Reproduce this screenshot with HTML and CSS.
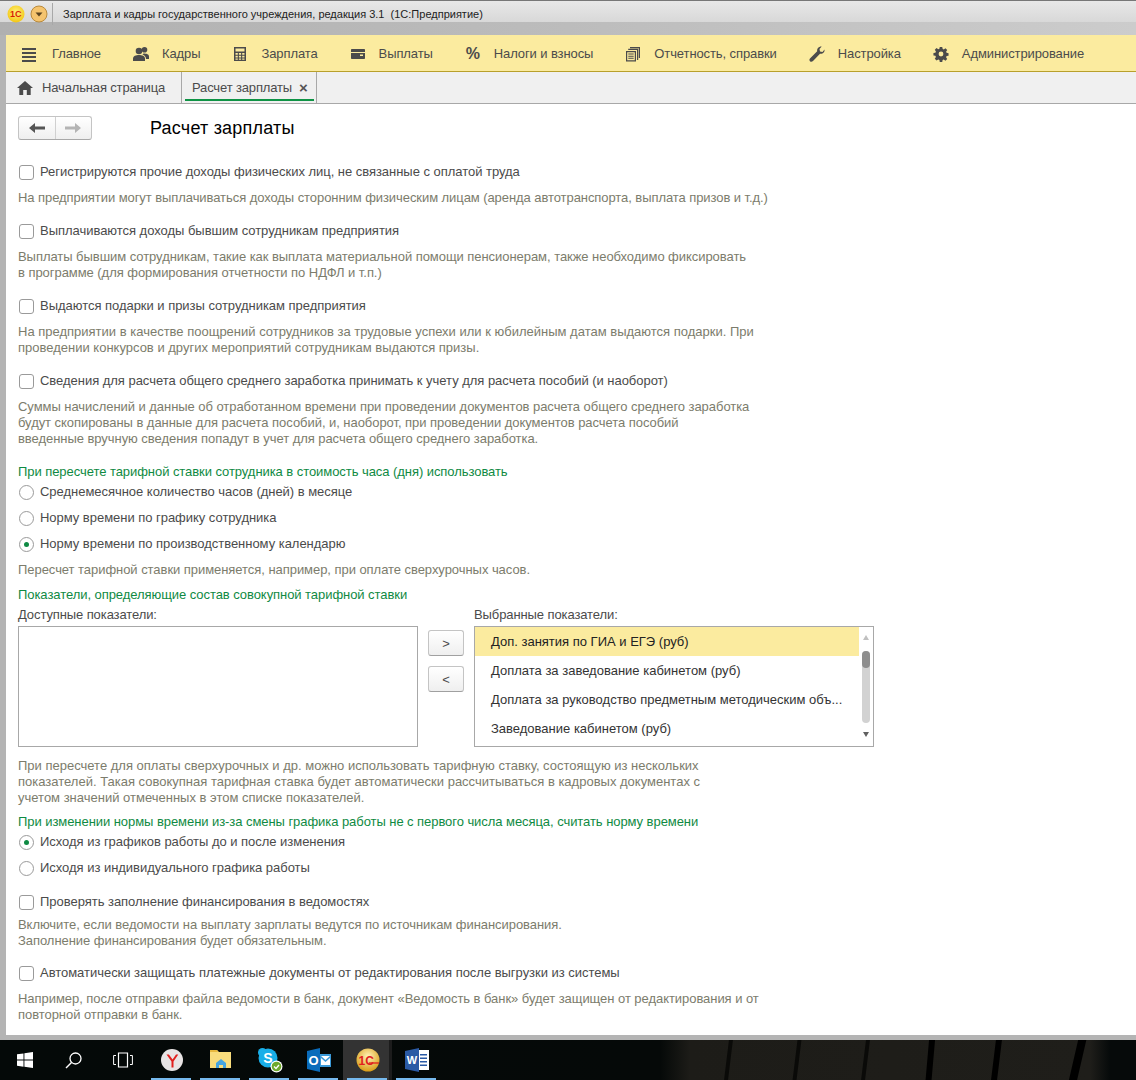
FILE: index.html
```html
<!DOCTYPE html>
<html lang="ru">
<head>
    <meta charset="UTF-8">
    <meta name="viewport" content="width=device-width, initial-scale=1.0">
    <title>Расчет зарплаты</title>
    <link rel="stylesheet" href="styles.css">
</head>
<body>
    <div class="window">
        <div class="titlebar">
            <svg class="logo" width="18" height="18" viewBox="0 0 18 18">
                <defs>
                    <radialGradient id="gold" cx="50%" cy="40%" r="60%">
                        <stop offset="0" stop-color="#fff27a"/>
                        <stop offset="1" stop-color="#f3c613"/>
                    </radialGradient>
                </defs>
                <circle cx="9" cy="9" r="8.5" fill="url(#gold)"/>
                <text x="3" y="12" class="logo-text">1С</text>
            </svg>
            <svg class="menu-btn" width="18" height="18" viewBox="0 0 18 18">
                <circle cx="9" cy="9" r="8" fill="#f5c46e" stroke="#b98a3c"/>
                <path d="M5.5 7.5h7L9 11.5z" fill="#5a4320"/>
            </svg>
            <span class="title-sep"></span>
            <span class="title-text">Зарплата и кадры государственного учреждения, редакция 3.1&nbsp; (1С:Предприятие)</span>
        </div>

        <div class="client">
            <nav class="sections">
                <a class="section section-first">
                    <svg class="section-icon" viewBox="0 0 16 16"><path d="M1 2h14v2H1zM1 6h14v2H1zM1 10h14v2H1zM1 14h14v2H1z"/></svg>
                    Главное
                </a>
                <a class="section">
                    <svg class="section-icon" viewBox="0 0 16 16"><circle cx="6" cy="5" r="3.3"/><path d="M0 15v-2.500C0 10 3 9 6 9s6 1 6 3.500V15z"/><circle cx="11.500" cy="3.800" r="2.800"/><path d="M10.500 7.500c3 0 5.500.8 5.500 3V13h-3c0-2-1-3.500-3.500-4.500z"/></svg>
                    Кадры
                </a>
                <a class="section">
                    <svg class="section-icon" viewBox="0 0 16 16"><path fill-rule="evenodd" d="M2 1h12v14H2zM3.500 2.500v3h9v-3zM3.500 7v1.800h2.300V7zM6.900 7v1.800h2.200V7zM10.200 7v1.800h2.300V7zM3.500 9.800v1.700h2.300V9.800zM6.900 9.800v1.700h2.200V9.800zM10.200 9.800v1.700h2.300V9.800zM3.500 12.500v1.200h2.300v-1.200zM6.900 12.500v1.200h2.200v-1.200zM10.200 12.500v1.200h2.300v-1.200z"/></svg>
                    Зарплата
                </a>
                <a class="section">
                    <svg class="section-icon" viewBox="0 0 16 16"><path fill-rule="evenodd" d="M2 3h12c.6 0 1 .4 1 1v8c0 .6-.4 1-1 1H2c-.6 0-1-.4-1-1V4c0-.6.4-1 1-1zM1 6h14v1H1zM10 8.500v1.500h3V8.500z"/></svg>
                    Выплаты
                </a>
                <a class="section">
                    <span class="section-icon percent">%</span>
                    Налоги и взносы
                </a>
                <a class="section">
                    <svg class="section-icon" viewBox="0 0 16 16"><path fill="none" stroke="currentColor" stroke-width="1.200" d="M5 1.600h9.400V12M3.200 3.400h9.400V14"/><path fill-rule="evenodd" d="M1 5h10v10.500H1zM2.200 6.200v8.100h7.600V6.200zM3.300 7.600h5.400v1H3.300zM3.300 9.700h5.400v1H3.300zM3.300 11.800h5.400v1H3.300z"/></svg>
                    Отчетность, справки
                </a>
                <a class="section">
                    <svg class="section-icon" viewBox="0 0 16 16"><path d="M15.500 3.500c.4 2.500-1.700 4.800-4.500 4.300L4 15c-1 1-2.200 1-3 .2s-.8-2 .2-3l7-7C7.700 2.500 10 .2 12.700.5L10.500 3l.5 2.500 2.500.5z"/></svg>
                    Настройка
                </a>
                <a class="section">
                    <svg class="section-icon" viewBox="-1 -1 18 18"><path fill-rule="evenodd" d="M6.600 0h2.800l.4 2.200 1.300.6 1.900-1.300 2 2-1.300 1.900.6 1.300 2.200.4v2.800l-2.200.4-.6 1.300 1.300 1.900-2 2-1.900-1.300-1.300.6-.4 2.200H6.600l-.4-2.200-1.300-.6L3 15.300l-2-2 1.300-1.900-.6-1.300L-.5 9.700V6.900l2.200-.4.6-1.300L1 3.300l2-2 1.900 1.300 1.300-.6zM8 5.300a2.700 2.700 0 1 0 0 5.400 2.700 2.700 0 0 0 0-5.400z"/></svg>
                    Администрирование
                </a>
            </nav>

            <div class="tabs">
                <div class="tab tab-home">
                    <svg class="home-icon" width="16" height="14" viewBox="0 0 16 14"><path d="M8 0l8 7h-2.300v7H9.800V9H6.200v5H2.300V7H0z"/></svg>
                    Начальная страница
                </div>
                <div class="tab tab-active">
                    Расчет зарплаты
                    <span class="tab-close">×</span>
                </div>
            </div>

            <main class="page">
                <div class="toolbar">
                    <div class="nav-buttons">
                        <span class="nav-btn">
                            <svg width="16" height="12" viewBox="0 0 16 12"><path d="M0 6l6-5v3.500h10v3H6V11z" fill="#555"/></svg>
                        </span>
                        <span class="nav-btn">
                            <svg width="16" height="12" viewBox="0 0 16 12"><path d="M16 6l-6-5v3.500H0v3h10V11z" fill="#b4b4b4"/></svg>
                        </span>
                    </div>
                    <h1 class="page-title">Расчет зарплаты</h1>
                </div>

                <label class="option"><span class="checkbox"></span>Регистрируются прочие доходы физических лиц, не связанные с оплатой труда</label>
                <p class="hint hint-wide">На предприятии могут выплачиваться доходы сторонним физическим лицам (аренда автотранспорта, выплата призов и т.д.)</p>

                <label class="option"><span class="checkbox"></span>Выплачиваются доходы бывшим сотрудникам предприятия</label>
                <p class="hint">Выплаты бывшим сотрудникам, такие как выплата материальной помощи пенсионерам, также необходимо фиксировать<br>в программе (для формирования отчетности по НДФЛ и т.п.)</p>

                <label class="option"><span class="checkbox"></span>Выдаются подарки и призы сотрудникам предприятия</label>
                <p class="hint hint-plain">На предприятии в качестве поощрений сотрудников за трудовые успехи или к юбилейным датам выдаются подарки. При<br>проведении конкурсов и других мероприятий сотрудникам выдаются призы.</p>

                <label class="option"><span class="checkbox"></span>Сведения для расчета общего среднего заработка принимать к учету для расчета пособий (и наоборот)</label>
                <p class="hint">Суммы начислений и данные об отработанном времени при проведении документов расчета общего среднего заработка<br>будут скопированы в данные для расчета пособий, и, наоборот, при проведении документов расчета пособий<br>введенные вручную сведения попадут в учет для расчета общего среднего заработка.</p>

                <div class="group-title">При пересчете тарифной ставки сотрудника в стоимость часа (дня) использовать</div>
                <label class="option option-first"><span class="radio"></span>Среднемесячное количество часов (дней) в месяце</label>
                <label class="option option-next"><span class="radio"></span>Норму времени по графику сотрудника</label>
                <label class="option option-next"><span class="radio radio-on"></span>Норму времени по производственному календарю</label>
                <p class="hint">Пересчет тарифной ставки применяется, например, при оплате сверхурочных часов.</p>

                <div class="group-title group-title-tight">Показатели, определяющие состав совокупной тарифной ставки</div>
                <div class="pickers">
                    <div class="picker picker-left">
                        <div class="picker-label">Доступные показатели:</div>
                        <div class="listbox"></div>
                    </div>
                    <div class="move-buttons">
                        <button class="move-btn" type="button">&gt;</button>
                        <button class="move-btn" type="button">&lt;</button>
                    </div>
                    <div class="picker picker-right">
                        <div class="picker-label">Выбранные показатели:</div>
                        <div class="listbox listbox-filled">
                            <ul class="list-rows">
                                <li class="list-row list-row-current">Доп. занятия по ГИА и ЕГЭ (руб)</li>
                                <li class="list-row">Доплата за заведование кабинетом (руб)</li>
                                <li class="list-row">Доплата за руководство предметным методическим объ...</li>
                                <li class="list-row">Заведование кабинетом (руб)</li>
                            </ul>
                            <div class="scrollbar">
                                <span class="scroll-up"></span>
                                <div class="scroll-track"><span class="scroll-thumb"></span></div>
                                <span class="scroll-down"></span>
                            </div>
                        </div>
                    </div>
                </div>
                <p class="hint hint-list">При пересчете для оплаты сверхурочных и др. можно использовать тарифную ставку, состоящую из нескольких<br>показателей. Такая совокупная тарифная ставка будет автоматически рассчитываться в кадровых документах с<br>учетом значений отмеченных в этом списке показателей.</p>

                <div class="group-title group-title-tighter">При изменении нормы времени из-за смены графика работы не с первого числа месяца, считать норму времени</div>
                <label class="option option-first"><span class="radio radio-on"></span>Исходя из графиков работы до и после изменения</label>
                <label class="option option-next"><span class="radio"></span>Исходя из индивидуального графика работы</label>

                <label class="option option-after"><span class="checkbox"></span>Проверять заполнение финансирования в ведомостях</label>
                <p class="hint hint-close">Включите, если ведомости на выплату зарплаты ведутся по источникам финансирования.<br>Заполнение финансирования будет обязательным.</p>

                <label class="option option-last"><span class="checkbox"></span>Автоматически защищать платежные документы от редактирования после выгрузки из системы</label>
                <p class="hint">Например, после отправки файла ведомости в банк, документ «Ведомость в банк» будет защищен от редактирования и от<br>повторной отправки в банк.</p>
            </main>
        </div>
    </div>

    <footer class="taskbar">
        <span class="task">
            <svg width="16" height="16" viewBox="0 0 16 16"><path d="M0 2.300l6.500-.9v6.200H0zM7.400 1.300L16 0v7.600H7.400zM0 8.500h6.500v6.200L0 13.800zM7.400 8.500H16V16l-8.600-1.200z" fill="#fff"/></svg>
        </span>
        <span class="task">
            <svg width="17" height="17" viewBox="0 0 17 17"><circle cx="10.500" cy="6.500" r="5.500" fill="none" stroke="#fff" stroke-width="1.300"/><path d="M6.500 10.500L1 16" stroke="#fff" stroke-width="1.500"/></svg>
        </span>
        <span class="task">
            <svg width="20" height="16" viewBox="0 0 20 16"><path d="M5.500 1h9v14h-9z" fill="none" stroke="#fff" stroke-width="1.200"/><path d="M3 3.500H.6v9H3M17 3.500h2.400v9H17" fill="none" stroke="#fff"/></svg>
        </span>
        <span class="task task-open">
            <svg width="24" height="24" viewBox="0 0 24 24"><circle cx="12" cy="12" r="11" fill="#e8e4e4"/><path d="M6.500 6.500l5 7v6h2v-6l4.800-7h-2.300l-3.400 5-3.700-5z" fill="#e1201e"/></svg>
        </span>
        <span class="task task-open">
            <svg width="22" height="22" viewBox="0 0 22 22"><path d="M0 1h7l2 2h12v16H0z" fill="#f8dc7c"/><path d="M0 1h7l1 2H0z" fill="#e8b93e"/><path d="M6 19v-5l5-4 5 4v5z" fill="#45a4e0"/><path d="M9 19v-3h4v3z" fill="#f8dc7c"/></svg>
        </span>
        <span class="task task-open">
            <svg width="26" height="26" viewBox="0 0 26 26">
                <circle cx="11" cy="11" r="9.500" fill="#18aee8"/>
                <circle cx="5.500" cy="5.500" r="4.500" fill="#18aee8"/>
                <circle cx="16.500" cy="16.500" r="4.500" fill="#18aee8"/>
                <text x="11" y="16" class="skype-text">S</text>
                <circle cx="19.500" cy="19.500" r="6" fill="#fff"/>
                <circle cx="19.500" cy="19.500" r="4.800" fill="#6ea92c"/>
                <path d="M17 19.500l2 2 3-3.500" fill="none" stroke="#fff" stroke-width="1.300"/>
            </svg>
        </span>
        <span class="task task-open">
            <svg width="24" height="24" viewBox="0 0 24 24">
                <path d="M0 3l13-3v24L0 21z" fill="#0a6cbb"/>
                <path d="M13 6h11v13H13z" fill="#3b9ad8"/>
                <path d="M14 8h9v9h-9z" fill="#fff"/>
                <path d="M14 8l4.500 4L23 8v2l-4.500 4L14 10z" fill="#3b9ad8"/>
                <text x="6.500" y="16.500" class="outlook-text">O</text>
            </svg>
        </span>
        <span class="task task-open task-active">
            <svg width="24" height="24" viewBox="0 0 24 24">
                <defs>
                    <radialGradient id="gold2" cx="50%" cy="35%" r="65%">
                        <stop offset="0" stop-color="#fff4b8"/>
                        <stop offset="1" stop-color="#d99c17"/>
                    </radialGradient>
                </defs>
                <circle cx="12" cy="12" r="11.500" fill="url(#gold2)"/>
                <text x="2.500" y="16.500" class="onec-text">1С</text>
                <path d="M13 15h10" stroke="#e1201e" stroke-width="1.300"/>
            </svg>
        </span>
        <span class="task task-open">
            <svg width="24" height="24" viewBox="0 0 24 24">
                <path d="M9 2h15v20H9z" fill="#fff"/>
                <path d="M15 6h7v1.500h-7zM15 9.500h7V11h-7zM15 13h7v1.500h-7zM15 16.500h7V18h-7z" fill="#2b5aa5"/>
                <path d="M0 3l14-3v24L0 21z" fill="#2b5aa5"/>
                <text x="7" y="16" class="word-text">W</text>
            </svg>
        </span>
    </footer>
</body>
</html>
```

FILE: styles.css
```css
* {
    box-sizing: border-box;
}
body {
    font-family: "Liberation Sans", Arial, sans-serif;
    font-size: 13px;
    line-height: 16px;
    color: #4b4b4b;
    margin: 0;
    height: 1080px;
    display: flex;
    flex-direction: column;
    overflow: hidden;
    background: #000;
}
.window {
    height: 1040px;
    display: flex;
    flex-direction: column;
    background: #b4b4b4;
    border-top: 1px solid #777;
}
/* window title */
.titlebar {
    height: 34px;
    display: flex;
    align-items: center;
    padding: 0 0 8px 7px;
    background:
        linear-gradient(180deg, #e8e8e8 0, #d8d8d8 21px, transparent 21px),
        linear-gradient(90deg, #b0b0b0, #bcbcbc 50%, #cccccc);
}
.logo {
    display: block;
}
.logo-text {
    font-family: "Liberation Sans", sans-serif;
    font-size: 9px;
    font-weight: bold;
    fill: #d81e05;
}
.menu-btn {
    margin-left: 5px;
}
.title-sep {
    width: 1px;
    height: 22px;
    margin: 0 10px 0 4px;
    background: #a8a8a8;
}
.title-text {
    font-size: 11px;
    color: #222;
    white-space: nowrap;
}
.client {
    flex: 1;
    min-height: 0;
    display: flex;
    flex-direction: column;
    margin-left: 6px;
    margin-bottom: 5px;
    background: #fff;
}
/* yellow section panel */
.sections {
    height: 37px;
    display: flex;
    align-items: center;
    gap: 32px;
    padding: 1px 0 0 15px;
    background: #fbeb9f;
    border-bottom: 1px solid #b8a02c;
    flex-shrink: 0;
}
.section {
    display: flex;
    align-items: center;
    gap: 13px;
    white-space: nowrap;
    color: #4b4b4b;
    letter-spacing: -0.1px;
}
.section-first {
    gap: 15px;
}
.section-icon {
    width: 16px;
    height: 16px;
    fill: #4b4b4b;
    color: #4b4b4b;
    flex-shrink: 0;
}
.percent {
    font-size: 16px;
    font-weight: bold;
    line-height: 16px;
    text-align: center;
}
/* open tabs */
.tabs {
    height: 32px;
    display: flex;
    background: #f0f0f0;
    border-bottom: 1px solid #a8a8a8;
    flex-shrink: 0;
}
.tab {
    display: flex;
    align-items: center;
    white-space: nowrap;
    border-right: 1px solid #a8a8a8;
    letter-spacing: -0.15px;
}
.tab-home {
    width: 176px;
    padding-left: 11px;
    gap: 9px;
}
.home-icon {
    fill: #4b4b4b;
}
.tab-active {
    width: 135px;
    padding-left: 10px;
    gap: 7px;
    position: relative;
}
.tab-active::after {
    content: '';
    position: absolute;
    left: 3px;
    right: 2px;
    bottom: 2px;
    height: 2px;
    background: #0f9345;
}
.tab-close {
    font-size: 15px;
    font-weight: bold;
    color: #555;
}
/* form */
.page {
    flex: 1;
    padding: 12px 0 0 12px;
    overflow: hidden;
}
.toolbar {
    height: 25px;
    display: flex;
    align-items: flex-start;
}
.nav-buttons {
    width: 74px;
    height: 24px;
    display: flex;
    border: 1px solid #c4c4c4;
    border-bottom-color: #a8a8a8;
    border-radius: 3px;
    background: linear-gradient(180deg, #fff, #efefef);
}
.nav-btn {
    flex: 1;
    display: flex;
    align-items: center;
    justify-content: center;
}
.nav-btn + .nav-btn {
    border-left: 1px solid #d0d0d0;
}
.page-title {
    margin: 0 0 0 58px;
    font-size: 18px;
    font-weight: normal;
    line-height: 24px;
    letter-spacing: 0.2px;
    color: #000;
}
.option {
    display: flex;
    align-items: center;
    gap: 6px;
    height: 16px;
    margin-top: 17px;
    white-space: nowrap;
    letter-spacing: -0.03px;
}
.toolbar + .option {
    margin-top: 23px;
}
.option-first {
    margin-top: 4px;
}
.option-next {
    margin-top: 10px;
}
.option-after {
    margin-top: 18px;
}
.option-last {
    margin-top: 16px;
}
.checkbox,
.radio {
    width: 15px;
    height: 15px;
    margin-left: 1px;
    background: #fff;
    border: 1px solid #9a9a9a;
    flex-shrink: 0;
}
.checkbox {
    border-radius: 3px;
}
.radio {
    border-radius: 50%;
    display: flex;
    align-items: center;
    justify-content: center;
}
.radio-on::before {
    content: '';
    width: 5px;
    height: 5px;
    border-radius: 50%;
    background: #0f8a43;
}
.hint {
    margin: 10px 0 0;
    color: #7c7c6c;
    white-space: nowrap;
    letter-spacing: -0.05px;
}
.hint-plain {
    letter-spacing: 0;
}
.hint-wide {
    letter-spacing: -0.07px;
}
.hint-close {
    margin-top: 7px;
}
.hint-list {
    margin-top: 11px;
    letter-spacing: 0;
}
.group-title {
    margin-top: 17px;
    color: #0f8a43;
    white-space: nowrap;
    letter-spacing: -0.06px;
}
.group-title-tight {
    margin-top: 9px;
}
.group-title-tighter {
    margin-top: 8px;
}
/* two lists with the move buttons */
.pickers {
    display: flex;
    margin-top: 4px;
}
.picker-left {
    width: 400px;
}
.picker-right {
    width: 400px;
}
.picker-label {
    height: 16px;
    margin-bottom: 3px;
    white-space: nowrap;
    letter-spacing: -0.1px;
}
.listbox {
    height: 121px;
    background: #fff;
    border: 1px solid #a8a8a8;
}
.listbox-filled {
    display: flex;
}
.move-buttons {
    width: 56px;
    padding: 23px 0 0 10px;
    display: flex;
    flex-direction: column;
    gap: 10px;
}
.move-btn {
    width: 36px;
    height: 26px;
    padding: 0;
    font-family: inherit;
    font-size: 13px;
    color: #4b4b4b;
    border: 1px solid #c4c4c4;
    border-bottom-color: #a0a0a0;
    border-radius: 3px;
    background: linear-gradient(180deg, #fff, #efefef);
}
.list-rows {
    flex: 1;
    margin: 0;
    padding: 0;
    list-style: none;
}
.list-row {
    height: 29px;
    line-height: 29px;
    padding-left: 16px;
    color: #333;
    white-space: nowrap;
}
.list-row-current {
    background: #fbeb9f;
    color: #222;
}
.scrollbar {
    width: 14px;
    display: flex;
    flex-direction: column;
    align-items: center;
    padding: 8px 0 9px;
}
.scroll-up,
.scroll-down {
    width: 0;
    height: 0;
    border-left: 3px solid transparent;
    border-right: 3px solid transparent;
}
.scroll-up {
    border-bottom: 5px solid #c0c0c0;
}
.scroll-down {
    border-top: 5px solid #606060;
}
.scroll-track {
    flex: 1;
    width: 8px;
    margin: 11px 0 9px;
    border-radius: 4px;
    background: #d2d2d2;
}
.scroll-thumb {
    display: block;
    height: 17px;
    border-radius: 4px;
    background: #8e8e8e;
}
/* windows taskbar, planks of the wallpaper drawn as gradients */
.taskbar {
    height: 40px;
    display: flex;
    flex-shrink: 0;
    background:
        linear-gradient(97deg, transparent 723px, #0a0a08 724px 727px, transparent 728px),
        linear-gradient(97deg, transparent 791px, #0a0a08 792px 795px, transparent 796px),
        linear-gradient(97deg, transparent 859px, #0a0a08 860px 863px, transparent 864px),
        linear-gradient(95deg, transparent 925px, #000 926px 931px, transparent 932px),
        linear-gradient(97deg, transparent 988px, #000 989px 994px, transparent 995px),
        linear-gradient(103deg, transparent 1050px, #000 1051px 1058px, transparent 1059px),
        linear-gradient(90deg, #040908 0, #050908 660px, #1d1c18 690px, #1f1e1a 1090px, #060a0a 1110px);
}
.task {
    width: 49px;
    display: flex;
    align-items: center;
    justify-content: center;
    flex-shrink: 0;
    position: relative;
}
.task-open::after {
    content: '';
    position: absolute;
    left: 4px;
    right: 5px;
    bottom: 0;
    height: 2px;
    background: #76b9ed;
}
.task-active {
    background: linear-gradient(90deg, #333 46px, #1c1c1c 46px);
}
.skype-text,
.outlook-text,
.word-text,
.onec-text {
    font-family: "Liberation Sans", sans-serif;
    font-weight: bold;
    text-anchor: middle;
}
.skype-text {
    font-size: 14px;
    fill: #fff;
}
.outlook-text {
    font-size: 13px;
    fill: #fff;
}
.word-text {
    font-size: 11px;
    fill: #fff;
}
.onec-text {
    font-size: 12px;
    fill: #e1201e;
    text-anchor: start;
}
```
